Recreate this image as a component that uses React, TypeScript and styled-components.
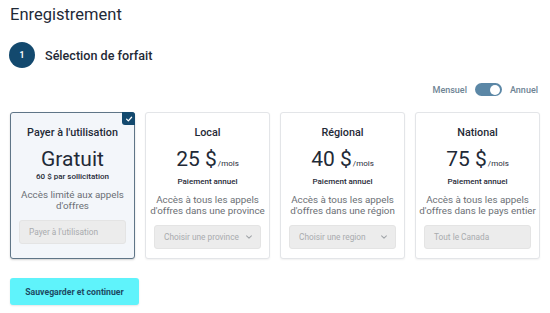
import React, { useState } from "react";
import styled, { createGlobalStyle } from "styled-components";

const Global = createGlobalStyle`
  html, body { margin: 0; padding: 0; background: #ffffff; }
  body { font-family: Roboto, "Noto Sans", Arial, sans-serif; color: #1f2a37; }
  * { box-sizing: border-box; }
`;

const Page = styled.div`
  width: 550px;
  height: 313px;
  padding: 5px 10px 0 10px;
  display: flex;
  flex-direction: column;
`;

const Title = styled.h1`
  margin: 0;
  font-size: 16.5px;
  line-height: 20px;
  font-weight: 400;
  color: #1f2a37;
`;

const StepRow = styled.div`
  display: flex;
  align-items: center;
  gap: 10px;
  margin-top: 17px;
  margin-left: -1px;
`;

const StepCircle = styled.div`
  width: 26px;
  height: 26px;
  border-radius: 50%;
  background: #13496e;
  color: #ffffff;
  font-size: 8.5px;
  font-weight: 700;
  display: flex;
  align-items: center;
  justify-content: center;
`;

const StepLabel = styled.span`
  font-size: 12.6px;
  font-weight: 500;
  color: #1f2a37;
`;

const ToggleRow = styled.div`
  display: flex;
  justify-content: flex-end;
  align-items: center;
  gap: 8px;
  margin-top: 15px;
  padding-right: 2px;
`;

const ToggleText = styled.span`
  font-size: 9px;
  font-weight: 500;
  color: #6e8494;
`;

const Switch = styled.button<{ $on: boolean }>`
  width: 27px;
  height: 13px;
  border-radius: 7px;
  border: none;
  padding: 0;
  background: ${(p) => (p.$on ? "#5b87a6" : "#c7d0d6")};
  position: relative;
  cursor: pointer;
`;

const Knob = styled.span<{ $on: boolean }>`
  position: absolute;
  top: 1.5px;
  left: ${(p) => (p.$on ? "15px" : "1.5px")};
  width: 10px;
  height: 10px;
  border-radius: 50%;
  background: #ffffff;
`;

const Cards = styled.div`
  display: grid;
  grid-template-columns: repeat(4, 125px);
  gap: 10px;
  margin-top: 16px;
`;

const Card = styled.div<{ $selected?: boolean }>`
  position: relative;
  height: 147px;
  border-radius: 3px;
  border: 1px solid ${(p) => (p.$selected ? "#5f7587" : "#e3e5e8")};
  background: ${(p) => (p.$selected ? "#f3f6fa" : "#ffffff")};
  box-shadow: 0 1px 2px rgba(0, 0, 0, ${(p) => (p.$selected ? 0.18 : 0.06)});
  display: flex;
  flex-direction: column;
  align-items: center;
  padding: 13px 6px 0 6px;
`;

const Badge = styled.div`
  position: absolute;
  top: -1px;
  right: -1px;
  width: 13px;
  height: 13px;
  background: #13496e;
  border-radius: 0 3px 0 3px;
  display: flex;
  align-items: center;
  justify-content: center;
`;

const CardTitle = styled.div`
  font-size: 10.8px;
  line-height: 13px;
  font-weight: 500;
  color: #1f2a37;
  white-space: nowrap;
`;

const Price = styled.div`
  margin-top: 9px;
  display: flex;
  align-items: baseline;
  font-size: 21px;
  line-height: 22px;
  font-weight: 400;
  color: #1f2a37;
`;

const Per = styled.span`
  font-size: 8px;
  margin-left: 1px;
`;

const Sub = styled.div`
  font-size: 8px;
  line-height: 10px;
  font-weight: 500;
  color: #1f2a37;
  margin-top: 2px;
  white-space: nowrap;
`;

const Desc = styled.div`
  margin-top: 7px;
  font-size: 9.8px;
  line-height: 11px;
  color: #6b6f75;
  text-align: center;
  white-space: nowrap;
  height: 22px;
`;

const Field = styled.div`
  margin-top: 9px;
  width: 107px;
  height: 24px;
  border-radius: 3px;
  background: #ececec;
  border: 1px solid #e4e4e4;
  display: flex;
  align-items: center;
  justify-content: space-between;
  padding: 0 7px 0 9px;
  font-size: 8.3px;
  color: #a9abae;
  white-space: nowrap;
`;

const SaveButton = styled.button`
  margin-top: 19px;
  width: 129px;
  height: 27px;
  border: none;
  border-radius: 3px;
  background: #5ff3fb;
  color: #1d4a63;
  font-family: Roboto, Arial, sans-serif;
  font-size: 8.7px;
  font-weight: 700;
  cursor: pointer;
  box-shadow: 0 1px 2px rgba(0, 0, 0, 0.1);
`;

const Chevron = () => (
  <svg width="8" height="8" viewBox="0 0 10 10" fill="none">
    <path d="M2 3.5 L5 6.5 L8 3.5" stroke="#a0a4a8" strokeWidth="1.3" strokeLinecap="round" strokeLinejoin="round" />
  </svg>
);

const Check = () => (
  <svg width="8" height="8" viewBox="0 0 10 10" fill="none">
    <path d="M2 5.2 L4.2 7.3 L8.2 2.8" stroke="#ffffff" strokeWidth="1.6" strokeLinecap="round" strokeLinejoin="round" />
  </svg>
);

type Plan = {
  title: string;
  price: string;
  per?: string;
  sub: string;
  desc: string[];
  field: string;
  select?: boolean;
  selected?: boolean;
};

const plans: Plan[] = [
  {
    title: "Payer à l'utilisation",
    price: "Gratuit",
    sub: "60 $ par sollicitation",
    desc: ["Accès limité aux appels", "d'offres"],
    field: "Payer à l'utilisation",
    selected: true,
  },
  {
    title: "Local",
    price: "25 $",
    per: "/mois",
    sub: "Paiement annuel",
    desc: ["Accès à tous les appels", "d'offres dans une province"],
    field: "Choisir une province",
    select: true,
  },
  {
    title: "Régional",
    price: "40 $",
    per: "/mois",
    sub: "Paiement annuel",
    desc: ["Accès à tous les appels", "d'offres dans une région"],
    field: "Choisir une region",
    select: true,
  },
  {
    title: "National",
    price: "75 $",
    per: "/mois",
    sub: "Paiement annuel",
    desc: ["Accès à tous les appels", "d'offres dans le pays entier"],
    field: "Tout le Canada",
  },
];

export default function App() {
  const [annual, setAnnual] = useState(true);
  return (
    <>
      <Global />
      <Page>
        <Title>Enregistrement</Title>
        <StepRow>
          <StepCircle>1</StepCircle>
          <StepLabel>Sélection de forfait</StepLabel>
        </StepRow>
        <ToggleRow>
          <ToggleText>Mensuel</ToggleText>
          <Switch $on={annual} onClick={() => setAnnual(!annual)}>
            <Knob $on={annual} />
          </Switch>
          <ToggleText>Annuel</ToggleText>
        </ToggleRow>
        <Cards>
          {plans.map((p) => (
            <Card key={p.title} $selected={p.selected}>
              {p.selected && (
                <Badge>
                  <Check />
                </Badge>
              )}
              <CardTitle>{p.title}</CardTitle>
              <Price>
                {p.price}
                {p.per && <Per>{p.per}</Per>}
              </Price>
              <Sub>{p.sub}</Sub>
              <Desc>
                {p.desc[0]}
                <br />
                {p.desc[1]}
              </Desc>
              <Field>
                <span>{p.field}</span>
                {p.select && <Chevron />}
              </Field>
            </Card>
          ))}
        </Cards>
        <SaveButton>Sauvegarder et continuer</SaveButton>
      </Page>
    </>
  );
}
